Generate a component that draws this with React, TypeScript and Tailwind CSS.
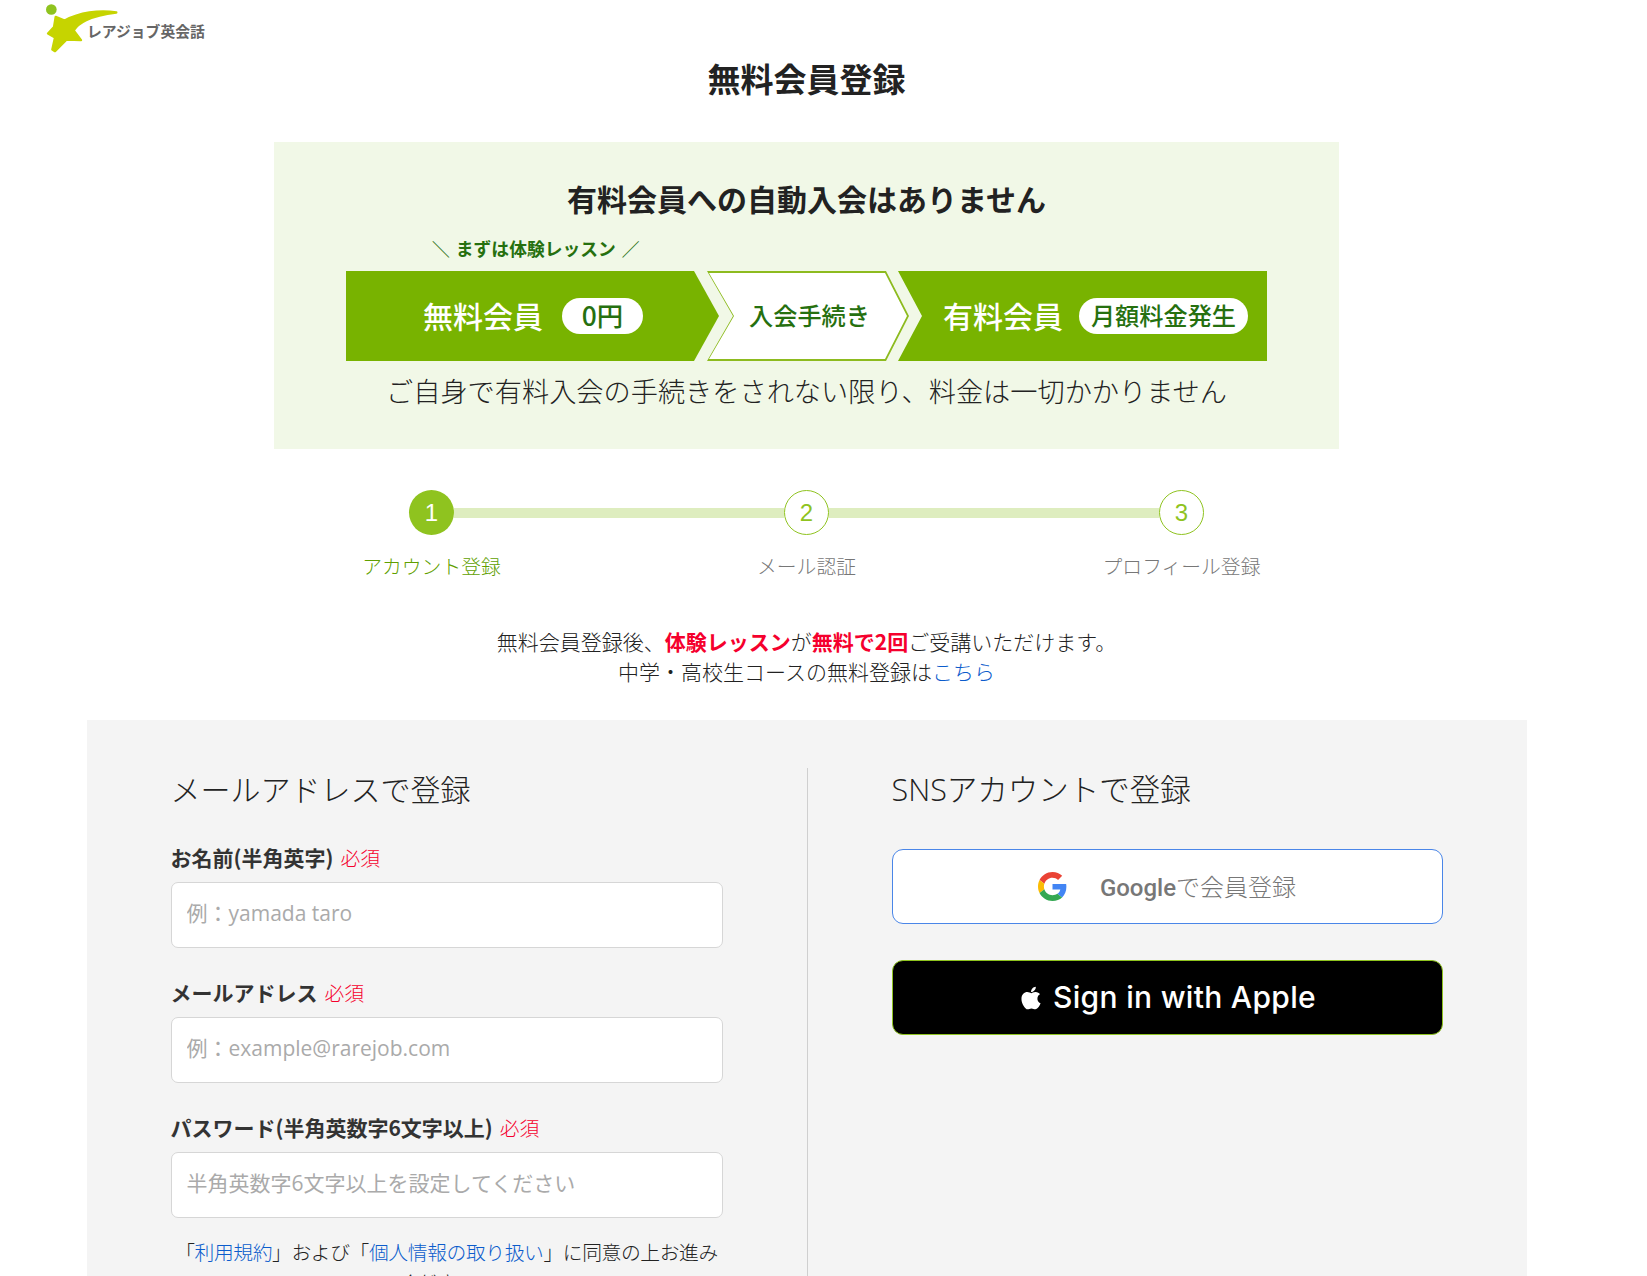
import { FaApple } from "react-icons/fa";

const LABEL = "text-[21px] font-bold text-[#333] leading-[28px] h-[30px] mb-[9px] whitespace-nowrap";
const REQUIRED = "ml-[7px] text-[19.8px] font-light text-[#f5002d]";
const INPUT =
  "block w-[552px] h-[66px] px-[15px] pb-[4px] rounded-[7px] border border-[#d6d6d6] bg-white text-[21px] text-[#333] placeholder:text-[#aaaaaa] outline-none font-['Open_Sans','Noto_Sans_CJK_JP',sans-serif]";

function Logo() {
  return (
    <div className="flex items-start">
      <svg viewBox="135 10 225 155" width="75" height="52" aria-hidden="true">
        <circle cx="157" cy="32" r="16" fill="#8fc31f" />
        <path
          d="M352 41 C300 32 240 42 197 65 L170 54 L165 85 L147 104 L168 116 L160 152 L168 157 L203 122 L246 124 L224 95 C235 75 270 50 352 41 Z"
          fill="#c6d400"
          stroke="#c6d400"
          strokeWidth="7"
          strokeLinejoin="round"
        />
      </svg>
      <span className="ml-[-32px] mt-[18px] text-[14.8px] font-bold leading-[22px] text-[#666] whitespace-nowrap">
        レアジョブ英会話
      </span>
    </div>
  );
}

function Banner() {
  return (
    <div className="flex h-[90px] mx-[72px]">
      <div className="flex w-[373px] shrink-0 items-center justify-center gap-[19px] bg-[#78b300] pl-[1px] [clip-path:polygon(0_0,348px_0,373px_50%,348px_100%,0_100%)]">
        <span className="pb-[2px] text-[30px] font-medium text-white">無料会員</span>
        <span className="flex h-[36px] w-[81px] items-center justify-center rounded-full bg-white pb-[2px] text-[26.4px] font-medium text-[#26700f]">
          0円
        </span>
      </div>
      <div className="relative ml-[-12px] flex w-[202px] shrink-0 items-center justify-center bg-[#8dbb1f] [clip-path:polygon(0_0,179px_0,202px_50%,179px_100%,0_100%,26px_50%)]">
        <div className="flex h-[86px] w-[198px] items-center justify-center bg-white pb-[2px] pl-[3px] text-[24.2px] font-medium text-[#26700f] [clip-path:polygon(0_0,176px_0,198px_50%,176px_100%,0_100%,25px_50%)]">
          入会手続き
        </div>
      </div>
      <div className="ml-[-11px] flex w-[369px] shrink-0 items-center gap-[16px] bg-[#78b300] pl-[45px] [clip-path:polygon(0_0,100%_0,100%_100%,0_100%,24px_50%)]">
        <span className="pb-[2px] text-[30px] font-medium text-white">有料会員</span>
        <span className="flex h-[36px] w-[169px] items-center justify-center rounded-full bg-white pb-[2px] text-[24.2px] font-medium text-[#26700f]">
          月額料金発生
        </span>
      </div>
    </div>
  );
}

function Stepper() {
  return (
    <div className="mt-[41px]">
      <div className="mx-auto flex w-[795px] items-center">
        <div className="flex h-[45px] w-[45px] shrink-0 items-center justify-center rounded-full bg-[#8fc31f] text-[24px] text-white font-['Liberation_Sans',sans-serif]">
          1
        </div>
        <div className="h-[10px] flex-1 bg-[#deedbf]" />
        <div className="flex h-[45px] w-[45px] shrink-0 items-center justify-center rounded-full border border-[#8fc31f] bg-white text-[24px] text-[#8fc31f] font-['Liberation_Sans',sans-serif]">
          2
        </div>
        <div className="h-[10px] flex-1 bg-[#deedbf]" />
        <div className="flex h-[45px] w-[45px] shrink-0 items-center justify-center rounded-full border border-[#8fc31f] bg-white text-[24px] text-[#8fc31f] font-['Liberation_Sans',sans-serif]">
          3
        </div>
      </div>
      <div className="mx-auto mt-[16px] grid w-[1125px] grid-cols-3 text-center text-[19.8px] font-light leading-[30px] text-[#777]">
        <div className="text-[#5f9f00]">アカウント登録</div>
        <div>メール認証</div>
        <div>プロフィール登録</div>
      </div>
    </div>
  );
}

function GoogleIcon() {
  return (
    <svg viewBox="0 0 48 48" width="29" height="29" aria-hidden="true">
      <path fill="#EA4335" d="M24 9.5c3.54 0 6.71 1.22 9.21 3.6l6.85-6.85C35.9 2.38 30.47 0 24 0 14.62 0 6.51 5.38 2.56 13.22l7.98 6.19C12.43 13.72 17.74 9.5 24 9.5z" />
      <path fill="#4285F4" d="M46.98 24.55c0-1.57-.15-3.09-.38-4.55H24v9.02h12.94c-.58 2.96-2.26 5.48-4.78 7.18l7.73 6c4.51-4.18 7.09-10.36 7.09-17.65z" />
      <path fill="#FBBC05" d="M10.53 28.59c-.48-1.45-.76-2.99-.76-4.59s.27-3.14.76-4.59l-7.98-6.19C.92 16.46 0 20.12 0 24c0 3.88.92 7.54 2.56 10.78l7.97-6.19z" />
      <path fill="#34A853" d="M24 48c6.48 0 11.93-2.13 15.89-5.81l-7.73-6c-2.15 1.45-4.92 2.3-8.16 2.3-6.26 0-11.57-4.22-13.47-9.91l-7.98 6.19C6.51 42.62 14.62 48 24 48z" />
    </svg>
  );
}

export default function App() {
  return (
    <div className="h-[1276px] w-full overflow-hidden bg-white text-[#333] font-['Noto_Sans_CJK_JP',sans-serif]">
      <div className="w-[1613px]">
        <header className="h-[57px] pl-[44px] pt-[2px]">
          <Logo />
        </header>
        <h1 className="h-[42px] text-center text-[33px] font-bold leading-[42px] text-[#222]">無料会員登録</h1>

        <section className="mx-auto mt-[43px] h-[307px] w-[1065px] bg-[#f1f8e7] pt-[37px]">
          <h2 className="text-center text-[30px] font-bold leading-[38px] text-[#222]">有料会員への自動入会はありません</h2>
          <p className="ml-[158px] mt-[20px] h-[22px] whitespace-nowrap text-[17.8px] font-bold leading-[22px] text-[#26700f]">
            ＼<span className="mx-[6px]">まずは体験レッスン</span>／
          </p>
          <div className="mt-[12px]">
            <Banner />
          </div>
          <p className="mt-[9px] text-center text-[27.2px] font-light leading-[40px] text-[#222]">
            ご自身で有料入会の手続きをされない限り、料金は一切かかりません
          </p>
        </section>

        <Stepper />

        <div className="mt-[45px] text-center text-[21px] font-light leading-[30px] text-[#222]">
          <p>
            無料会員登録後、<b className="font-bold text-[#f5002d]">体験レッスン</b>が
            <b className="font-bold text-[#f5002d]">無料で2回</b>ご受講いただけます。
          </p>
          <p>
            中学・高校生コースの無料登録は<a className="text-[#0b5ccc]">こちら</a>
          </p>
        </div>

        <section className="mx-auto mt-[34px] grid h-[600px] w-[1440px] grid-cols-[721px_719px] bg-[#f4f4f4] pt-[48px]">
          <div className="border-r border-[#cfcfcf] pl-[84px]">
            <h2 className="text-[30px] font-light leading-[40px] text-[#222]">メールアドレスで登録</h2>
            <div className="mt-[35px]">
              <div className={LABEL}>
                お名前(半角英字)<span className={REQUIRED}>必須</span>
              </div>
              <input className={INPUT} placeholder="例：yamada taro" />
            </div>
            <div className="mt-[30px]">
              <div className={LABEL}>
                メールアドレス<span className={REQUIRED}>必須</span>
              </div>
              <input className={INPUT} placeholder="例：example@rarejob.com" />
            </div>
            <div className="mt-[30px]">
              <div className={LABEL}>
                パスワード(半角英数字6文字以上)<span className={REQUIRED}>必須</span>
              </div>
              <input className={INPUT} placeholder="半角英数字6文字以上を設定してください" />
            </div>
            <p className="mt-[19px] w-[552px] whitespace-nowrap text-center text-[19.8px] font-light leading-[30px] tracking-[-0.4px] text-[#222]">
              「<a className="text-[#0b5ccc]">利用規約</a>」および「<a className="text-[#0b5ccc]">個人情報の取り扱い</a>」に同意の上お進み<br />ください。
            </p>
          </div>
          <div className="pl-[84px]">
            <h2 className="text-[30.5px] font-light leading-[40px] text-[#222]">
              <span className="font-['Open_Sans',sans-serif]">SNS</span>アカウントで登録
            </h2>
            <button
              type="button"
              className="mt-[40px] flex h-[75px] w-[551px] items-center justify-center rounded-[11px] border border-[#4a86e8] bg-white"
            >
              <GoogleIcon />
              <span className="ml-[33px] text-[24px] font-light text-[#777]">
                <span className="font-medium font-['Roboto',sans-serif]">Google</span>で会員登録
              </span>
            </button>
            <button
              type="button"
              className="mt-[36px] flex h-[75px] w-[551px] items-center justify-center rounded-[11px] border border-[#8fc31f] bg-black text-white"
            >
              <FaApple className="h-[26px] w-[26px]" />
              <span className="ml-[9px] text-[30px] font-medium tracking-[0.3px] font-['Inter',sans-serif]">Sign in with Apple</span>
            </button>
          </div>
        </section>
      </div>
    </div>
  );
}
